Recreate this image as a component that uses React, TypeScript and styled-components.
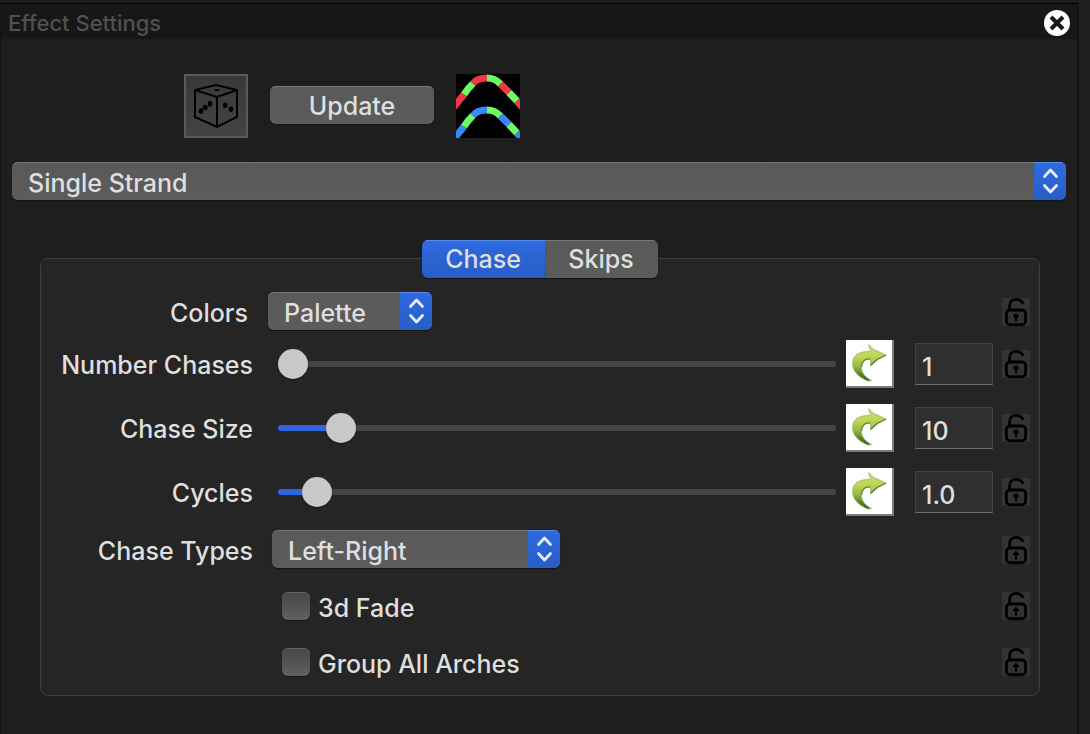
import React, { useState } from "react";
import styled, { createGlobalStyle, css } from "styled-components";

const GlobalStyle = createGlobalStyle`
  * { box-sizing: border-box; }
  body {
    margin: 0;
    background: #1e1e1e;
    color: #dfdfdf;
    font-family: Inter, "Liberation Sans", sans-serif;
    font-size: 25px;
    font-weight: 500;
    line-height: 30px;
  }
  button, input, select { font: inherit; color: inherit; margin: 0; }
`;

const raised = css`
  background: linear-gradient(#595959, #5c5c5c);
  box-shadow: inset 0 1px 0 #787878, 0 1px 1px #141414;
`;

const accent = css`
  background: linear-gradient(#2f6ae0, #285dc6);
  box-shadow: inset 0 1px 0 #5a8bee;
`;

const Frame = styled.main`
  min-height: 100vh;
  padding: 3px 11px 0 0;
  display: flex;
`;

const Panel = styled.section`
  flex: 1;
  min-width: 0;
  border: solid #131313;
  border-width: 1px 2px 0 1px;
  border-top-color: #000;
`;

const Header = styled.header`
  display: flex;
  align-items: center;
  justify-content: space-between;
  height: 35px;
  padding: 2px 7px 0;
  background: #171717;
`;

const Title = styled.h1`
  margin: 0;
  font-size: 22px;
  line-height: 30px;
  font-weight: 500;
  color: #505050;
`;

const CloseButton = styled.button`
  display: flex;
  padding: 0;
  border: 0;
  background: none;
`;

const Toolbar = styled.div`
  display: flex;
  align-items: center;
  gap: 22px;
  padding: 35px 0 24px 183px;
`;

const DiceButton = styled.button`
  display: flex;
  width: 64px;
  height: 64px;
  padding: 0;
  border: 2px solid #5a5a5a;
  background: linear-gradient(#393939, #434343);
`;

const UpdateButton = styled.button`
  width: 164px;
  height: 38px;
  margin-bottom: 2px;
  padding: 2px 0 0;
  border: 0;
  border-radius: 6px;
  ${raised}
`;

const EffectArea = styled.div`
  padding: 0 11px;
`;

const SelectBox = styled.div<{ $width?: number }>`
  position: relative;
  width: ${(p) => (p.$width ? `${p.$width}px` : "100%")};
  height: 38px;
  border-radius: 6px;
  overflow: hidden;
  ${raised}
`;

const NativeSelect = styled.select`
  appearance: none;
  width: 100%;
  height: 38px;
  padding: 4px 40px 0 16px;
  border: 0;
  background: none;
`;

const Stepper = styled.span`
  position: absolute;
  top: 0;
  right: 0;
  width: 32px;
  height: 38px;
  pointer-events: none;
  ${accent}
`;

const Settings = styled.section`
  padding: 40px 37px 0 39px;
`;

const Tabs = styled.div`
  position: relative;
  display: flex;
  width: 236px;
  margin: 0 auto -20px;
  border-radius: 6px;
  overflow: hidden;
  box-shadow: 0 1px 1px #141414;
`;

const Tab = styled.button<{ $active?: boolean }>`
  flex: ${(p) => (p.$active ? "0 0 124px" : "1")};
  height: 38px;
  padding: 0 2px 0 0;
  border: 0;
  ${(p) => (p.$active ? accent : raised)}
`;

const Group = styled.div`
  padding: 33px 9px 5px 0;
  border: 1px solid #3f3f3f;
  border-radius: 8px;
  background: #252525;
`;

const Row = styled.div<{ $height: number }>`
  display: flex;
  align-items: center;
  height: ${(p) => p.$height}px;
`;

const Label = styled.label<{ $end?: number }>`
  width: 212px;
  padding: 2px ${(p) => p.$end ?? 0}px 0 0;
  text-align: right;
  white-space: nowrap;
`;

const Control = styled.div<{ $inset: number }>`
  flex: 1;
  min-width: 0;
  padding: 0 10px 2px ${(p) => p.$inset}px;
`;

const PlainControl = styled(Control)`
  display: flex;
  padding-bottom: 0;
`;

const Checks = styled.div`
  padding-top: 2px;
`;

const Slider = styled.input<{ $fill: number }>`
  appearance: none;
  width: 100%;
  height: 30px;
  background: none;

  &::-webkit-slider-runnable-track {
    height: 6px;
    border-radius: 3px;
    background: linear-gradient(
      to right,
      #2f68dc calc(15px + (100% - 30px) * ${(p) => p.$fill}),
      #444 0
    );
  }
  &::-webkit-slider-thumb {
    appearance: none;
    width: 30px;
    height: 30px;
    margin-top: -12px;
    border-radius: 50%;
    background: #c8c8c8;
    box-shadow: 0 1px 1px #161616;
  }
`;

const ResetButton = styled.button`
  display: flex;
  width: 48px;
  height: 48px;
  padding: 0;
  border: solid;
  border-width: 0 2px 2px 0;
  border-color: #fff #7c7c7c #7c7c7c #fff;
  background: #fff;
`;

const ValueInput = styled.input`
  width: 78px;
  height: 42px;
  margin: 0 9px 0 21px;
  padding: 6px 6px 0;
  border: 1px solid #424242;
  border-bottom: 1px solid #6c6c6c;
  border-radius: 0;
  background: #2f2f2f;
`;

const LockButton = styled.button`
  display: flex;
  width: 28px;
  height: 28px;
  padding: 0;
  border: 0;
  background: #333;
`;

const CheckLabel = styled.label`
  display: flex;
  align-items: center;
  gap: 8px;
`;

const CheckText = styled.span`
  padding-top: 4px;
`;

const Checkbox = styled.input`
  appearance: none;
  width: 28px;
  height: 28px;
  border-radius: 6px;
  background: linear-gradient(#464646, #606060);
  box-shadow: inset 0 1px 0 #666, 0 1px 1px #161616;
`;

function LockIcon() {
  return (
    <svg width="28" height="28" viewBox="0 0 28 28" fill="none" stroke="#000" strokeWidth="2.8">
      <rect x="4.4" y="12" width="19.2" height="14.6" rx="3.4" />
      <path d="M7.6 12V7.5C7.6 3.5 10 1.4 14 1.4c3.6 0 5.8 1.4 7.2 4.4" />
      <path d="M14 15l3.4 3-3.400 3-3.400-3z" fill="#000" stroke="none" />
      <path d="M14 16v7.6" strokeWidth="2" />
    </svg>
  );
}

function Lock({ name }: { name: string }) {
  return (
    <LockButton type="button" aria-label={`Lock ${name}`}>
      <LockIcon />
    </LockButton>
  );
}

function DiceIcon() {
  return (
    <svg width="60" height="60" viewBox="2 2 60 60" fill="none" stroke="#000" strokeWidth="2">
      <path d="M32 11L11 16v27l22 10 20-10V16zM11 16l22 7 20-7M33 23v30" />
      <g fill="#000" stroke="none">
        <ellipse cx="33" cy="16" rx="3" ry="1.1" />
        <ellipse cx="17" cy="37" rx="2.3" ry="3" />
        <ellipse cx="21.3" cy="33.4" rx="2.3" ry="2.7" />
        <ellipse cx="26" cy="29.8" rx="2.1" ry="3" />
        <ellipse cx="41.3" cy="31.3" rx="2.3" ry="2.7" />
        <ellipse cx="47" cy="35.3" rx="2.3" ry="2.7" />
      </g>
    </svg>
  );
}

const archPieces = [
  "M-3 34L8 20.5",
  "M8 20.5L12 15 17 9.5",
  "M17 9.5C20 5.5 24 4 31 4",
  "M31 4c6 0 9 1.500 13.500 6",
  "M44.5 10L53 18.5",
  "M53 18.5L61 27",
  "M61 27l5 6",
];

function ArchesIcon() {
  const arch = (main: string) =>
    archPieces.map((d, i) => <path key={d} d={d} stroke={i % 2 ? "#6dfa64" : main} />);
  return (
    <svg width="64" height="64" viewBox="0 0 64 64" fill="none" strokeWidth="7">
      <rect width="64" height="64" fill="#000" />
      <g>{arch("#f03848")}</g>
      <g transform="translate(0 32)">{arch("#3888fa")}</g>
    </svg>
  );
}

function ResetIcon() {
  return (
    <svg width="46" height="46" viewBox="0 0 46 46">
      <defs>
        <linearGradient id="leaf" x1="0" y1="0" x2="0" y2="1">
          <stop offset="0" stopColor="#c6dc68" />
          <stop offset="0.35" stopColor="#bdd657" />
          <stop offset="0.6" stopColor="#93b83c" />
          <stop offset="1" stopColor="#1f5a10" />
        </linearGradient>
      </defs>
      <path
        d="M22.5 4.5L28 9.5 40 15 32 19.5 24.5 25.5 24.5 19C19 18 15.5 22 15.5 27 15.5 33 19 37 25.5 40.500L22 41C12 37 6.500 31 6.500 23.500 6.500 15 13 11 24.500 11.500z"
        fill="url(#leaf)"
        stroke="#a3b877"
        strokeWidth="0.8"
      />
      <path
        d="M24.500 25.500L31 19.500 40 15M24.500 19C19 18 15.500 22 15.500 27"
        fill="none"
        stroke="#66753f"
        strokeWidth="1.2"
      />
    </svg>
  );
}

function CloseIcon() {
  return (
    <svg width="26" height="26" viewBox="0 0 26 26">
      <circle cx="13" cy="13" r="13" fill="#fff" />
      <path d="M7 7l12 12M19 7L7 19" stroke="#171717" strokeWidth="4" />
    </svg>
  );
}

interface DropDownProps {
  id: string;
  options: string[];
  width?: number;
  label?: string;
}

function DropDown({ id, options, width, label }: DropDownProps) {
  return (
    <SelectBox $width={width}>
      <NativeSelect id={id} aria-label={label}>
        {options.map((o) => (
          <option key={o}>{o}</option>
        ))}
      </NativeSelect>
      <Stepper>
        <svg
          width="32"
          height="38"
          viewBox="0 0 32 38"
          fill="none"
          stroke="#e4ecfc"
          strokeWidth="2.8"
          strokeLinecap="round"
          strokeLinejoin="round"
        >
          <path d="M10.500 14.500l6-6.500 6 6.500M10.500 23.500l6 6.500 6-6.500" />
        </svg>
      </Stepper>
    </SelectBox>
  );
}

interface SliderRowProps {
  id: string;
  label: string;
  min: number;
  max: number;
  initial: number;
  digits?: number;
}

function SliderRow({ id, label, min, max, initial, digits = 0 }: SliderRowProps) {
  const [value, setValue] = useState(initial);
  return (
    <Row $height={64}>
      <Label htmlFor={id}>{label}</Label>
      <PlainControl $inset={25}>
        <Slider
          id={id}
          type="range"
          min={min}
          max={max}
          step={digits ? 0.1 : 1}
          value={value}
          $fill={(value - min) / (max - min)}
          onChange={(e) => setValue(Number(e.target.value))}
        />
      </PlainControl>
      <ResetButton type="button" aria-label={`Reset ${label}`} onClick={() => setValue(initial)}>
        <ResetIcon />
      </ResetButton>
      <ValueInput
        type="text"
        aria-label={`${label} value`}
        value={value.toFixed(digits)}
        onChange={(e) => setValue(Number(e.target.value) || min)}
      />
      <Lock name={label} />
    </Row>
  );
}

function CheckRow({ label }: { label: string }) {
  return (
    <Row $height={56}>
      <PlainControl $inset={241}>
        <CheckLabel>
          <Checkbox type="checkbox" />
          <CheckText>{label}</CheckText>
        </CheckLabel>
      </PlainControl>
      <Lock name={label} />
    </Row>
  );
}

export default function App() {
  return (
    <>
      <GlobalStyle />
      <Frame>
        <Panel>
          <Header>
            <Title>Effect Settings</Title>
            <CloseButton type="button" aria-label="Close">
              <CloseIcon />
            </CloseButton>
          </Header>
          <Toolbar>
            <DiceButton type="button" aria-label="Randomize">
              <DiceIcon />
            </DiceButton>
            <UpdateButton type="button">Update</UpdateButton>
            <ArchesIcon />
          </Toolbar>
          <EffectArea>
            <DropDown id="effect" label="Effect" options={["Single Strand"]} />
          </EffectArea>
          <Settings>
            <Tabs role="tablist">
              <Tab type="button" role="tab" aria-selected="true" $active>
                Chase
              </Tab>
              <Tab type="button" role="tab" aria-selected="false">
                Skips
              </Tab>
            </Tabs>
            <Group>
              <Row $height={40}>
                <Label htmlFor="colors" $end={5}>
                  Colors
                </Label>
                <Control $inset={15}>
                  <DropDown id="colors" options={["Palette"]} width={164} />
                </Control>
                <Lock name="Colors" />
              </Row>
              <SliderRow id="number" label="Number Chases" min={1} max={20} initial={1} />
              <SliderRow id="size" label="Chase Size" min={1} max={100} initial={10} />
              <SliderRow id="cycles" label="Cycles" min={0.1} max={20} initial={1} digits={1} />
              <Row $height={52}>
                <Label htmlFor="types">Chase Types</Label>
                <Control $inset={19}>
                  <DropDown id="types" options={["Left-Right"]} width={288} />
                </Control>
                <Lock name="Chase Types" />
              </Row>
              <Checks>
                <CheckRow label="3d Fade" />
                <CheckRow label="Group All Arches" />
              </Checks>
            </Group>
          </Settings>
        </Panel>
      </Frame>
    </>
  );
}
